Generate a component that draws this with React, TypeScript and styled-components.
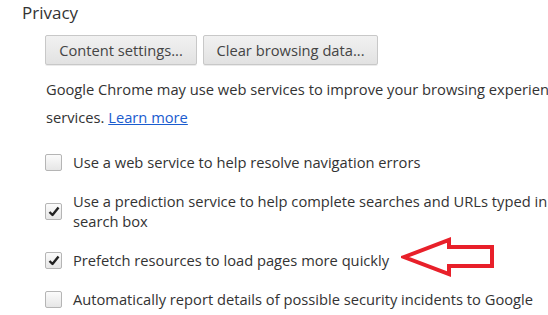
import React from "react";
import styled, { createGlobalStyle } from "styled-components";

const Global = createGlobalStyle`
  html, body { margin: 0; padding: 0; background: #fff; }
  body { font-family: "Open Sans", "Noto Sans", sans-serif; color: #333; overflow: hidden; }
`;

const Page = styled.div`
  width: 548px;
  height: 315px;
  overflow: hidden;
  position: relative;
  padding: 1px 0 0 22px;
  box-sizing: border-box;
`;

const Title = styled.h3`
  margin: 0;
  font-size: 17px;
  font-weight: 400;
  line-height: 23px;
  color: #333;
`;

const Body = styled.div`
  padding-left: 23px;
`;

const ButtonRow = styled.div`
  display: flex;
  gap: 6px;
  margin-top: 11px;
`;

const Button = styled.button<{ $w: number }>`
  width: ${(p) => p.$w}px;
  height: 30px;
  padding: 0;
  font-family: inherit;
  font-size: 14.7px;
  color: #444;
  border: 1px solid #c8c8c8;
  border-radius: 2px;
  background: linear-gradient(#f1f1f1, #e2e2e2);
  box-shadow: 0 1px 0 rgba(0, 0, 0, 0.08);
`;

const Para = styled.p`
  margin: 10px 0 0 1px;
  font-size: 14.7px;
  line-height: 28px;
  white-space: nowrap;
`;

const Link = styled.a`
  color: #1a5ccf;
  text-decoration: underline;
`;

const List = styled.div`
  margin-top: 21px;
  display: flex;
  flex-direction: column;
  gap: 19px;
`;

const Row = styled.div`
  position: relative;
  display: flex;
  align-items: center;
  gap: 11px;
`;

const Box = styled.span`
  flex: none;
  width: 15px;
  height: 15px;
  border: 1px solid #b5b5b5;
  border-radius: 2px;
  background: linear-gradient(#fbfbfb, #e6e6e6);
  display: flex;
  align-items: center;
  justify-content: center;
`;

const Label = styled.span`
  font-size: 14.7px;
  line-height: 20px;
  white-space: pre;
`;

const Arrow = styled.svg`
  position: absolute;
  left: 356px;
  top: -13px;
`;

const Check = () => (
  <svg width="12" height="11" viewBox="0 0 12 11">
    <path d="M1.5 6 L4.5 9 L10.5 1.5" fill="none" stroke="#222" strokeWidth="2.4" strokeLinejoin="round" />
  </svg>
);

const Item = ({ checked, children, arrow }: { checked?: boolean; children: React.ReactNode; arrow?: boolean }) => (
  <Row>
    <Box>{checked && <Check />}</Box>
    <Label>{children}</Label>
    {arrow && (
      <Arrow width="96" height="44" viewBox="0 0 96 44">
        <path
          d="M3 20 L48 3 L48 10 L91 10 L91 29 L48 29 L48 37 Z"
          fill="none"
          stroke="#e8202a"
          strokeWidth="4"
          strokeLinejoin="miter"
        />
      </Arrow>
    )}
  </Row>
);

export default function App() {
  return (
    <Page>
      <Global />
      <Title>Privacy</Title>
      <Body>
        <ButtonRow>
          <Button $w={152}>Content settings...</Button>
          <Button $w={175}>Clear browsing data...</Button>
        </ButtonRow>
        <Para>
          Google Chrome may use web services to improve your browsing experience.
          <br />
          services. <Link href="#">Learn more</Link>
        </Para>
        <List>
          <Item>Use a web service to help resolve navigation errors</Item>
          <Item checked>
            {"Use a prediction service to help complete searches and URLs typed in\nsearch box"}
          </Item>
          <Item checked arrow>Prefetch resources to load pages more quickly</Item>
          <Item>Automatically report details of possible security incidents to Google</Item>
        </List>
      </Body>
    </Page>
  );
}
